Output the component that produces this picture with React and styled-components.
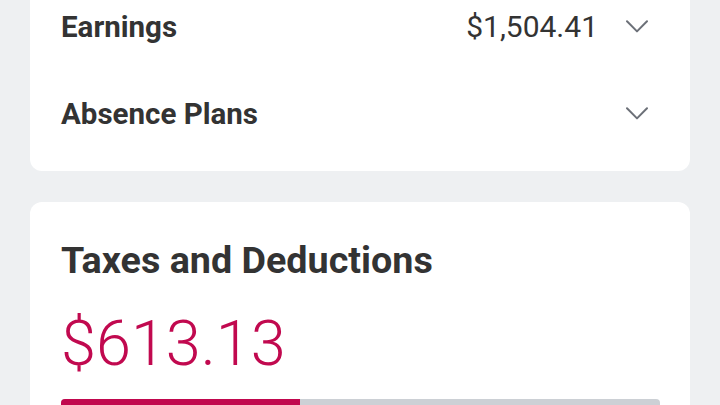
import React from "react";
import styled, { createGlobalStyle } from "styled-components";

const GlobalStyle = createGlobalStyle`
    body {
        margin: 0;
        background: #eef0f2;
        font-family: Roboto, "Noto Sans", sans-serif;
        color: #333333;
    }
`;

const rows = [
    { label: "Earnings", amount: "$1,504.41" },
    { label: "Absence Plans" },
];

const Chevron = () => (
    <ChevronIcon viewBox="0 0 22 13" width="22" height="13">
        <path d="M1 1.2 L11 11.4 L21 1.2" />
    </ChevronIcon>
);

const App = () => {
    const spent = 39.9;

    return (
        <Page>
            <GlobalStyle />
            <ListCard>
                {rows.map((row) => (
                    <Row key={row.label}>
                        <Label>{row.label}</Label>
                        <Right>
                            {row.amount && <Amount>{row.amount}</Amount>}
                            <Chevron />
                        </Right>
                    </Row>
                ))}
            </ListCard>
            <SummaryCard>
                <Title>Taxes and Deductions</Title>
                <Total>$613.13</Total>
                <Bar>
                    <Fill style={{ width: `${spent}%` }} />
                </Bar>
            </SummaryCard>
        </Page>
    );
};

export default App;

const Page = styled.div`
    display: flex;
    flex-direction: column;
    gap: 31px;
    padding: 0 30px;
    height: 405px;
    overflow: hidden;
`;

const Card = styled.div`
    background: #ffffff;
    border-radius: 12px;
`;

const ListCard = styled(Card)`
    margin-top: -17px;
    padding: 0 42px 14px 31px;
`;

const Row = styled.div`
    display: flex;
    align-items: center;
    justify-content: space-between;
    height: 87px;
`;

const Label = styled.span`
    font-size: 29.5px;
    font-weight: 700;
    color: #333333;
`;

const Right = styled.div`
    display: flex;
    align-items: center;
    gap: 28px;
`;

const Amount = styled.span`
    font-size: 30px;
    font-weight: 400;
    color: #333333;
`;

const ChevronIcon = styled.svg`
    fill: none;
    stroke: #6c7078;
    stroke-width: 2;
    stroke-linecap: round;
    stroke-linejoin: round;
    display: block;
`;

const SummaryCard = styled(Card)`
    padding: 36px 30px 40px 31px;
`;

const Title = styled.h2`
    margin: 0;
    font-size: 37.7px;
    line-height: 44px;
    font-weight: 700;
    color: #333333;
`;

const Total = styled.div`
    margin-top: 25px;
    font-size: 63px;
    line-height: 74px;
    font-weight: 300;
    color: #c1094f;
`;

const Bar = styled.div`
    margin-top: 18px;
    height: 12px;
    border-radius: 4px;
    background: #ccd0d5;
    overflow: hidden;
`;

const Fill = styled.div`
    height: 100%;
    background: #c1084e;
`;
